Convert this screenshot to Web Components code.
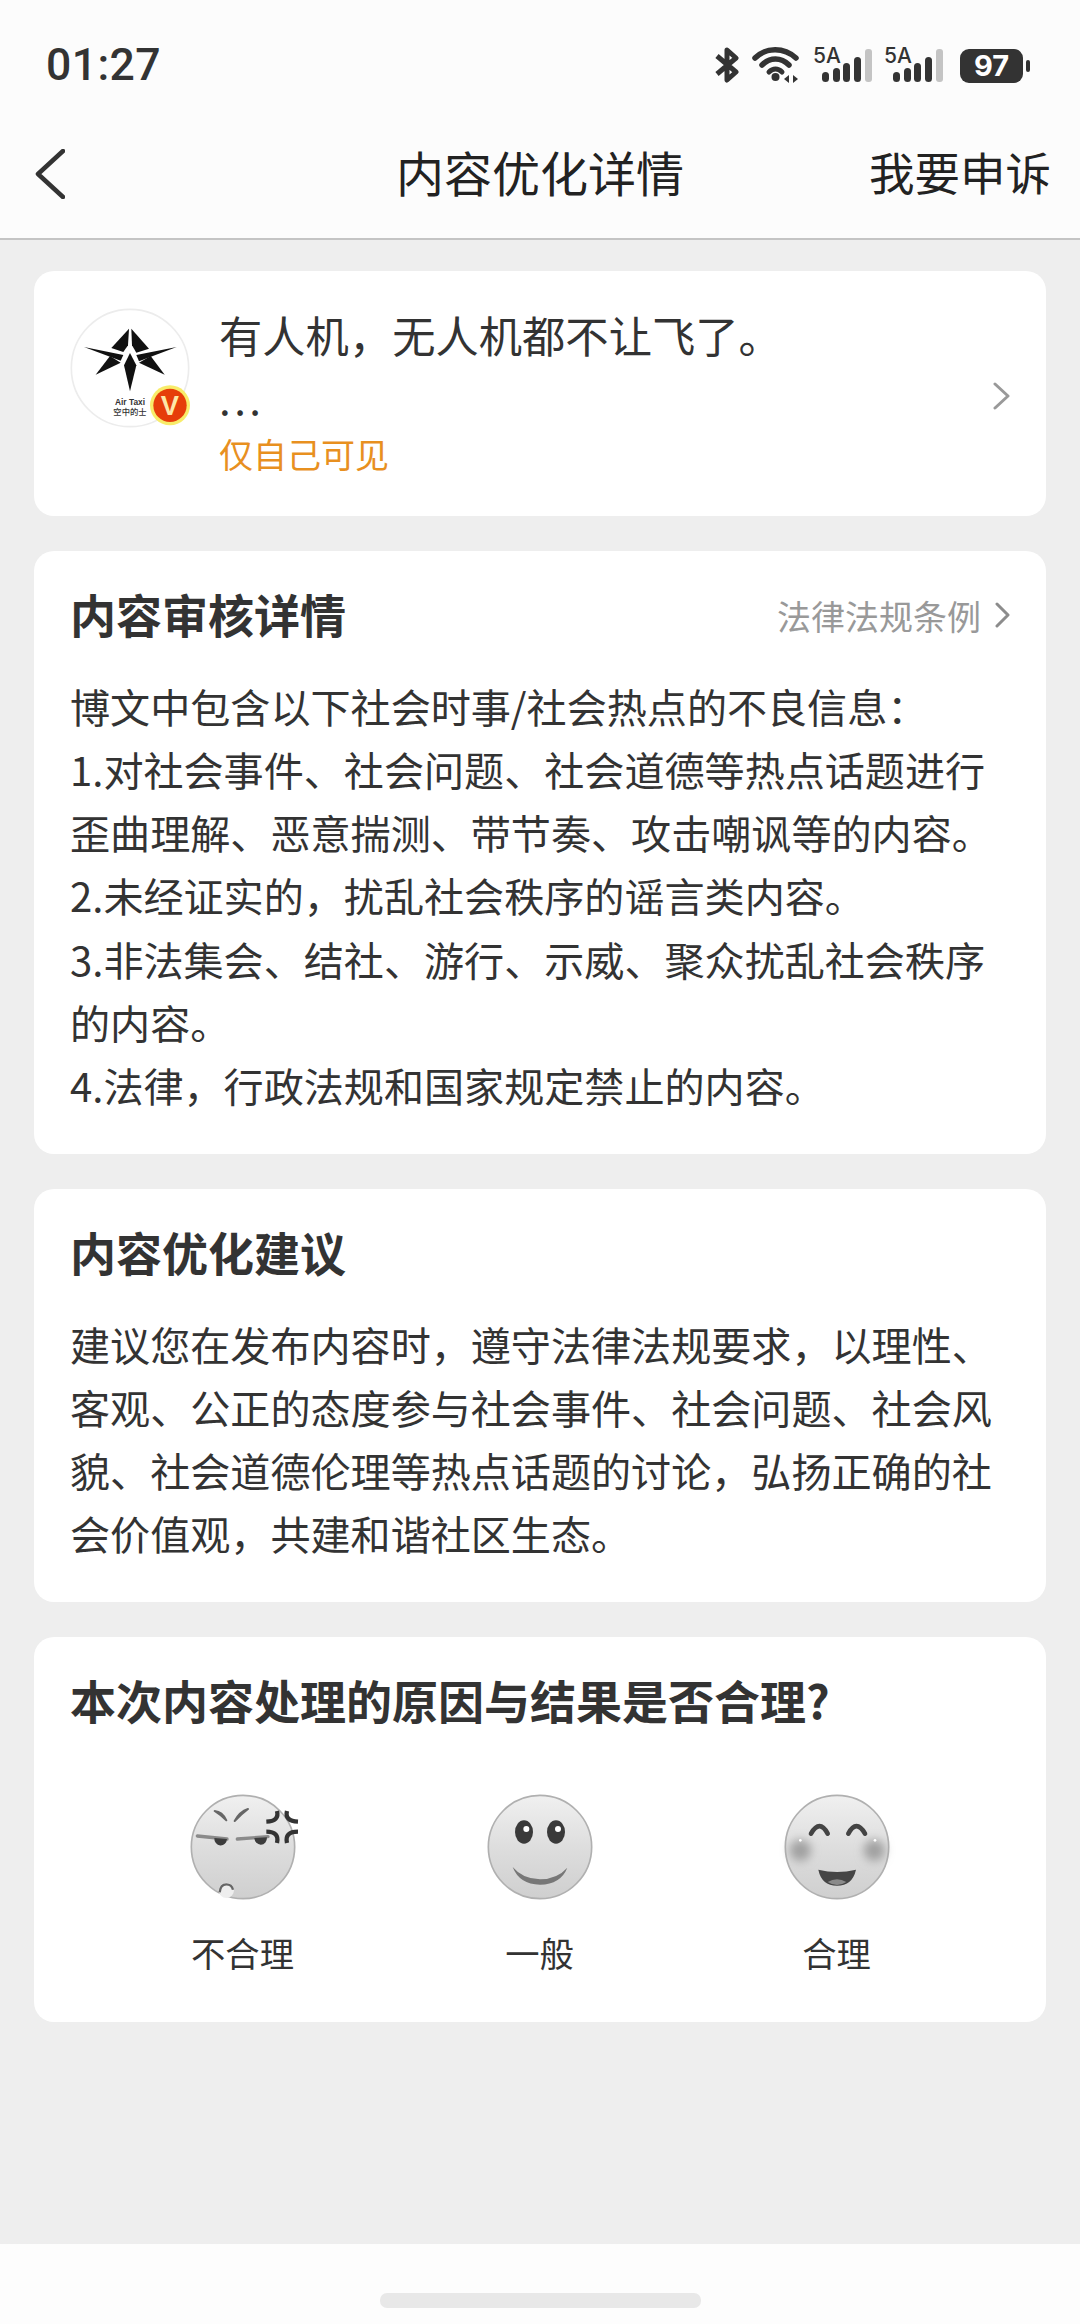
<!DOCTYPE html>
<html lang="zh-CN">
<head>
<meta charset="utf-8">
<title>内容优化详情</title>
<style>
  html, body { margin: 0; padding: 0; }
  body {
    width: 1080px;
    height: 2324px;
    overflow: hidden;
    background: #eeeeee;
    color: #333;
    font-family: "Noto Sans CJK SC", "Noto Sans", sans-serif;
  }
  #page { display: flex; flex-direction: column; height: 2324px; }
  #cards { display: flex; flex-direction: column; gap: 35.3px; padding: 31px 34px 0; flex: 1 1 auto; }
  #faces { display: grid; grid-template-columns: repeat(3, 297px); justify-content: center; margin-top: 56px; }
</style>
</head>
<body>
<div id="page">
  <top-bar heading="内容优化详情" action="我要申诉" time="01:27" battery="97"></top-bar>
  <div id="cards">
    <post-card visibility="仅自己可见">有人机&#xFF0C;无人机都不让飞了。</post-card>
    <info-card heading="内容审核详情" link="法律法规条例">
      博文中包含以下社会时事/社会热点的不良信息&#xFF1A;<br>
      1.对社会事件、社会问题、社会道德等热点话题进行歪曲理解、恶意揣测、带节奏、攻击嘲讽等的内容。<br>
      2.未经证实的&#xFF0C;扰乱社会秩序的谣言类内容。<br>
      3.非法集会、结社、游行、示威、聚众扰乱社会秩序的内容。<br>
      4.法律&#xFF0C;行政法规和国家规定禁止的内容。
    </info-card>
    <info-card heading="内容优化建议">
      建议您在发布内容时&#xFF0C;遵守法律法规要求&#xFF0C;以理性、客观、公正的态度参与社会事件、社会问题、社会风貌、社会道德伦理等热点话题的讨论&#xFF0C;弘扬正确的社会价值观&#xFF0C;共建和谐社区生态。
    </info-card>
    <info-card heading="本次内容处理的原因与结果是否合理?" tight>
      <div id="faces">
        <face-option kind="angry" label="不合理"></face-option>
        <face-option kind="smile" label="一般"></face-option>
        <face-option kind="happy" label="合理"></face-option>
      </div>
    </info-card>
  </div>
  <home-bar></home-bar>
</div>

<script>
const CHEVRON = (w, h, color, sw) => /* html */ `
  <svg width="${w}" height="${h}" viewBox="0 0 ${w} ${h}" fill="none" stroke="${color}" stroke-width="${sw}" stroke-linecap="round" stroke-linejoin="round">
    <path d="M${sw / 2 + .5} ${sw / 2 + .5} L${w - sw / 2 - .5} ${h / 2} L${sw / 2 + .5} ${h - sw / 2 - .5}"/>
  </svg>`;

const SIGNAL = /* html */ `
  <svg class="signal" width="60" height="44" viewBox="0 -8 60 44">
    <text x="0" y="16" font-family="Inter, 'Liberation Sans', sans-serif" font-size="21" font-weight="500" fill="#333">5A</text>
    <g fill="#333">
      <rect x="9" y="25" width="7" height="10" rx="3.5"/>
      <rect x="20" y="21" width="7" height="14" rx="3.5"/>
      <rect x="30" y="16" width="7" height="19" rx="3.5"/>
      <rect x="41" y="10" width="7" height="25" rx="3.5"/>
    </g>
    <rect x="52" y="2" width="7" height="33" rx="3" fill="#c4c4c4"/>
  </svg>`;

class TopBar extends HTMLElement {
  constructor() {
    super();
    this.attachShadow({ mode: 'open' });
    this.shadowRoot.innerHTML = /* html */ `
      <style>
        :host { display: block; background: #fcfcfc; border-bottom: 2px solid #c4c4c4; flex: 0 0 auto; }
        .status {
          height: 110px;
          box-sizing: border-box;
          padding: 47px 50px 0 46px;
          display: flex;
          justify-content: space-between;
          align-items: flex-start;
        }
        .time { font: 500 44.5px/36px Roboto, sans-serif; color: #333; letter-spacing: .4px; }
        .icons { display: flex; align-items: flex-end; height: 36px; }
        .icons > * { margin-left: 13px; }
        .icons > :first-child { margin-left: 0; }
        .icons > .signal + .signal { margin-left: 11px; }
        .icons > .battery { margin-left: 16px; }
        .battery { display: flex; align-items: center; gap: 3px; height: 35px; }
        .cell {
          width: 63px; height: 34px; border-radius: 9px; background: #333;
          color: #fff; font: 700 29px/34px Inter, "Liberation Sans", sans-serif;
          text-align: center;
        }
        .nub { width: 4px; height: 12px; border-radius: 2px; background: #333; }
        .nav {
          height: 128px;
          position: relative;
          display: flex;
          align-items: center;
          justify-content: space-between;
          padding: 0 29px 0 35px;
          box-sizing: border-box;
        }
        .back { display: block; height: 50px; }
        .heading {
          position: absolute; left: 0; right: 0; top: 34px; text-align: center;
          font-size: 48px; line-height: 54px; font-weight: 400; color: #222;
        }
        .action { font-size: 45.5px; line-height: 54px; font-weight: 400; color: #222; margin-top: -6px; }
      </style>
      <div class="status">
        <span class="time">${this.getAttribute('time')}</span>
        <div class="icons">
          <svg width="24" height="36" viewBox="0 0 24 36" fill="none" stroke="#333" stroke-width="5" stroke-linejoin="round">
            <path d="M2 9 L21 25 L12 33 V3 L21 11 L2 27"/>
          </svg>
          <svg width="48" height="36" viewBox="0 0 48 36" fill="none" stroke="#333" stroke-linecap="round">
            <path d="M3 11 C14 0 32 0 44 11" stroke-width="5.5"/>
            <path d="M10 18 C18 10 29 10 37 18" stroke-width="5.5"/>
            <path d="M17 25 C21 21 26 21 30 25" stroke-width="5"/>
            <circle cx="23.5" cy="30" r="4" fill="#333" stroke="none"/>
            <path d="M32 32 L37 28 V36 Z M41 28 L46 32 L41 36 Z" fill="#333" stroke="none"/>
          </svg>
          ${SIGNAL}
          ${SIGNAL}
          <div class="battery"><div class="cell">${this.getAttribute('battery')}</div><div class="nub"></div></div>
        </div>
      </div>
      <div class="nav">
        <svg class="back" width="30" height="50" viewBox="0 0 30 50" fill="none" stroke="#333" stroke-width="4.5" stroke-linecap="round" stroke-linejoin="round">
          <path d="M28 2 L3 25 L28 48"/>
        </svg>
        <span class="heading">${this.getAttribute('heading')}</span>
        <span class="action">${this.getAttribute('action')}</span>
      </div>`;
  }
}

class PostCard extends HTMLElement {
  constructor() {
    super();
    this.attachShadow({ mode: 'open' });
    this.shadowRoot.innerHTML = /* html */ `
      <style>
        :host {
          display: flex; background: #fff; border-radius: 20px;
          height: 245px; box-sizing: border-box; padding: 37px 36px 0 36px;
        }
        .avatar { flex: 0 0 120px; width: 120px; height: 120px; margin-right: 29px; display: block; }
        .body { flex: 1 1 auto; margin-top: -4px; }
        .line { font-size: 43.3px; line-height: 60px; color: #333; white-space: nowrap; }
        .dots { font-size: 42px; line-height: 66px; height: 71px; letter-spacing: 3.5px; color: #333; }
        .vis { font-size: 34px; line-height: 38px; color: #e8901f; }
        .more { align-self: center; margin-top: -28px; flex: 0 0 auto; }
      </style>
      <svg class="avatar" viewBox="-2 8 360 360">
        <circle cx="178" cy="188" r="176" fill="#fff" stroke="#ececec" stroke-width="5"/>
        <g fill="#111">
          <path d="M175 70 L122 128 L158 140 L172 120 Z"/>
          <path d="M182 70 L235 130 L197 142 L184 120 Z"/>
          <path d="M40 125 L158 149 L150 166 Z"/>
          <path d="M318 125 L197 149 L205 168 Z"/>
          <path d="M75 208 L118 152 L150 172 Z"/>
          <path d="M282 208 L240 152 L205 172 Z"/>
          <path d="M178 143 L197 180 L178 258 L160 180 Z"/>
        </g>
        <text x="178" y="298" text-anchor="middle" font-family="'Liberation Sans', sans-serif" font-size="25" font-weight="700" fill="#333">Air Taxi</text>
        <text x="178" y="328" text-anchor="middle" font-family="'Noto Sans CJK SC', sans-serif" font-size="25" font-weight="500" fill="#333">空中的士</text>
        <circle cx="298" cy="300" r="60" fill="#f8ec6a"/>
        <circle cx="298" cy="300" r="50" fill="#e63d0a"/>
        <text x="298" y="329" text-anchor="middle" font-family="'Liberation Sans', sans-serif" font-size="82" font-weight="700" fill="#fde7a8">V</text>
      </svg>
      <div class="body">
        <div class="line"><slot></slot></div>
        <div class="dots">...</div>
        <div class="vis">${this.getAttribute('visibility')}</div>
      </div>
      <div class="more">${CHEVRON(17, 28, '#999', 3)}</div>`;
  }
}

class InfoCard extends HTMLElement {
  constructor() {
    super();
    this.attachShadow({ mode: 'open' });
    const link = this.getAttribute('link');
    this.shadowRoot.innerHTML = /* html */ `
      <style>
        :host { display: block; background: #fff; border-radius: 20px; padding: 34px 37px 37.5px 36px; }
        .head { display: flex; align-items: center; justify-content: space-between; height: 60px; }
        .title { font-size: 46px; line-height: 60px; font-weight: 700; color: #333; white-space: nowrap; margin-top: -5px; }
        .link { display: flex; align-items: center; gap: 14px; font-size: 34px; color: #999; margin-right: -1px; }
        .text { margin-top: 28.5px; font-size: 40.1px; line-height: 63.2px; color: #333; }
        :host([tight]) { padding-bottom: 0; height: 385px; box-sizing: border-box; }
        :host([tight]) .text { margin-top: 0; font-size: 34px; line-height: normal; }
      </style>
      <div class="head">
        <span class="title">${this.getAttribute('heading')}</span>
        ${link ? `<span class="link">${link}${CHEVRON(15, 26, '#8c8c8c', 3)}</span>` : ''}
      </div>
      <div class="text"><slot></slot></div>`;
  }
}

const FACES = {
  angry: /* html */ `
    <g fill="#666" stroke="#666" stroke-width="6" stroke-linejoin="round">
      <path d="M-85 -108 Q-62 -106 -50 -80 Q-66 -96 -85 -108Z"/>
      <path d="M-25 -78 Q-10 -106 15 -114 Q-6 -98 -25 -78Z"/>
    </g>
    <g fill="none" stroke="#8a8a8a" stroke-width="10" stroke-linecap="round">
      <path d="M-137 -33 L-48 -24"/>
      <path d="M-17 -24 L75 -31"/>
    </g>
    <path d="M-86 -27 A19 21 0 0 0 -48 -24 Z" fill="#3c3c3c"/>
    <path d="M34 -27 A19 21 0 0 0 72 -29 Z" fill="#3c3c3c"/>
    <g fill="none" stroke="#333" stroke-width="13">
      <path d="M102 -108 Q110 -78 70 -76"/>
      <path d="M132 -108 Q124 -78 165 -76"/>
      <path d="M70 -46 Q110 -46 102 -12"/>
      <path d="M165 -46 Q124 -46 132 -12"/>
    </g>
    <circle cx="-50" cy="130" r="23" fill="#eee"/>
    <path d="M-70 136 Q-68 112 -50 112 Q-34 112 -30 128" fill="none" stroke="#666" stroke-width="7"/>`,
  smile: /* html */ `
    <ellipse cx="-48" cy="-45" rx="27" ry="35" fill="#3a3a3a"/>
    <ellipse cx="48" cy="-45" rx="27" ry="35" fill="#3a3a3a"/>
    <circle cx="-41" cy="-54" r="9" fill="#fff"/>
    <circle cx="54" cy="-54" r="9" fill="#fff"/>
    <path d="M-82 60 Q-62 112 0 113 Q62 112 82 62 Q52 96 0 97 Q-52 96 -82 60Z" fill="#777"/>`,
  happy: /* html */ `
    <circle cx="-110" cy="10" r="32" fill="#a0a0a0" filter="url(#blur)"/>
    <circle cx="112" cy="10" r="32" fill="#a0a0a0" filter="url(#blur)"/>
    <circle cx="-110" cy="-20" r="4" fill="#fff"/>
    <circle cx="114" cy="-20" r="4" fill="#fff"/>
    <path d="M-78 -40 Q-52 -85 -28 -40" fill="none" stroke="#444" stroke-width="14" stroke-linecap="round"/>
    <path d="M34 -40 Q58 -85 84 -40" fill="none" stroke="#444" stroke-width="14" stroke-linecap="round"/>
    <path d="M-56 68 Q0 82 57 68 Q46 116 0 116 Q-46 116 -56 68Z" fill="#454545"/>
    <path d="M-28 105 Q0 88 28 105 Q14 114 0 114 Q-14 114 -28 105Z" fill="#8a8a8a"/>`
};

class FaceOption extends HTMLElement {
  constructor() {
    super();
    this.attachShadow({ mode: 'open' });
    this.shadowRoot.innerHTML = /* html */ `
      <style>
        :host { display: flex; flex-direction: column; align-items: center; }
        svg { display: block; overflow: visible; }
        .label { margin-top: 21px; font-size: 34.3px; line-height: 48px; color: #333; }
      </style>
      <svg width="120" height="120" viewBox="-180 -180 360 360">
        <defs>
          <linearGradient id="ball" x1="0" y1="0" x2="0" y2="1">
            <stop offset="0" stop-color="#f0f0f0"/>
            <stop offset=".55" stop-color="#dcdcdc"/>
            <stop offset="1" stop-color="#cfcfcf"/>
          </linearGradient>
          <filter id="blur" x="-50%" y="-50%" width="200%" height="200%"><feGaussianBlur stdDeviation="14"/></filter>
        </defs>
        <circle r="155" fill="url(#ball)" stroke="#b0b0b0" stroke-width="5"/>
        ${FACES[this.getAttribute('kind')]}
      </svg>
      <div class="label">${this.getAttribute('label')}</div>`;
  }
}

class HomeBar extends HTMLElement {
  constructor() {
    super();
    this.attachShadow({ mode: 'open' });
    this.shadowRoot.innerHTML = /* html */ `
      <style>
        :host {
          display: flex; justify-content: center; flex: 0 0 auto;
          height: 80px; box-sizing: border-box; padding-top: 49px;
          background: #fdfdfd;
        }
        .handle { width: 321px; height: 15px; border-radius: 7px; background: #e8e8e8; }
      </style>
      <div class="handle"></div>`;
  }
}

customElements.define('top-bar', TopBar);
customElements.define('post-card', PostCard);
customElements.define('info-card', InfoCard);
customElements.define('face-option', FaceOption);
customElements.define('home-bar', HomeBar);
</script>
</body>
</html>
